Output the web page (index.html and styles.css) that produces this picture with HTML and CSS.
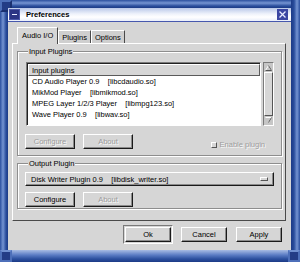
FILE: index.html
```html
<!DOCTYPE html>
<html>
<head>
<meta charset="utf-8">
<link rel="stylesheet" href="styles.css">
</head>
<body>
<div class="win">
  <div class="corner c-tl"></div>
  <div class="corner c-bl"></div>
  <div class="corner c-br"></div>
  <div class="titlebar">
    <span class="ticon"><span class="dash"></span></span>
    <span class="title">Preferences</span>
    <span class="close"><svg width="11" height="11" viewBox="0 0 11 11"><path d="M2.5 2.5 L8.5 8.5 M8.5 2.5 L2.5 8.5" stroke="#e8ecff" stroke-width="1.3" fill="none"/></svg></span>
  </div>
  <div class="client">
    <div class="notebook">
      <div class="tabs">
        <div class="tab active">Audio I/O</div>
        <div class="tab">Plugins</div>
        <div class="tab">Options</div>
      </div>
      <div class="page">
        <fieldset class="group g-input">
          <legend>Input Plugins</legend>
          <div class="listwrap">
            <div class="list">
              <div class="lhead">Input plugins</div>
              <div class="row">CD Audio Player 0.9&nbsp;&nbsp;&nbsp;&nbsp;[libcdaudio.so]</div>
              <div class="row">MikMod Player&nbsp;&nbsp;&nbsp;&nbsp;[libmikmod.so]</div>
              <div class="row">MPEG Layer 1/2/3 Player&nbsp;&nbsp;&nbsp;&nbsp;[libmpg123.so]</div>
              <div class="row">Wave Player 0.9&nbsp;&nbsp;&nbsp;&nbsp;[libwav.so]</div>
            </div>
            <div class="scroll">
              <svg class="arr" width="7" height="6" viewBox="0 0 7 6"><path d="M0.5 5.5 L3.5 0.5 L6.5 5.5" stroke="#fff" fill="none"/><path d="M3.5 0.5 L6.5 5.5 L0.5 5.5" stroke="#555" fill="none"/></svg>
              <div class="slider"></div>
              <svg class="arr" width="7" height="6" viewBox="0 0 7 6"><path d="M0.5 0.5 L6.5 0.5 L3.5 5.5" stroke="#fff" fill="none"/><path d="M6.5 0.5 L3.5 5.5" stroke="#555" fill="none"/></svg>
            </div>
          </div>
          <div class="btnrow">
            <button class="btn w50" disabled>Configure</button>
            <button class="btn w50" disabled>About</button>
            <span class="check"><span class="box"></span>Enable plugin</span>
          </div>
        </fieldset>
        <fieldset class="group g-output">
          <legend>Output Plugin</legend>
          <div class="optmenu"><span>Disk Writer Plugin 0.9&nbsp;&nbsp;&nbsp;&nbsp;[libdisk_writer.so]</span><span class="ind"></span></div>
          <div class="btnrow">
            <button class="btn w50">Configure</button>
            <button class="btn w50" disabled>About</button>
          </div>
        </fieldset>
      </div>
    </div>
    <div class="actions">
      <span class="defring"><button class="btn w46">Ok</button></span>
      <button class="btn w46">Cancel</button>
      <button class="btn w46">Apply</button>
    </div>
  </div>
</div>
</body>
</html>
```

FILE: styles.css
```css
* { box-sizing: border-box; }
html, body { margin: 0; padding: 0; }
body {
  font-family: "Liberation Sans", Arial, sans-serif;
  font-size: 7.5px;
  color: #000;
  background: #2a4f9f;
}
.win {
  position: relative;
  width: 300px;
  height: 262px;
  padding: 8px 9px 12px 8px;
  display: flex;
  flex-direction: column;
  background:
    linear-gradient(to right, #2b4f9e 0, #7594d2 3px, #2a4d9c 6px, #1c3a86 8px) left top / 8px 100% no-repeat,
    linear-gradient(to left, #2b4f9e 0, #7594d2 3px, #2a4d9c 6px, #1c3a86 9px) right top / 9px 100% no-repeat,
    linear-gradient(to bottom, #2b4f9e 0, #7594d2 3px, #2a4d9c 6px, #1c3a86 8px) left top / 100% 8px no-repeat,
    linear-gradient(to top, #1c3a86 0, #2b4f9e 3px, #5b7cc4 7px, #a8bce4 12px) left bottom / 100% 12px no-repeat,
    #2a4f9f;
}
.corner { position: absolute; width: 12px; height: 12px; background: #233c86; border: 2px solid #4d6fb9; }
.c-tl { left: 0; top: 0; border-right-color: #1a3070; border-bottom-color: #1a3070; }
.c-bl { left: 0; bottom: 0; border-top-color: #6f8fd0; }
.c-br { right: 0; bottom: 0; border-top-color: #6f8fd0; }

.titlebar {
  position: relative;
  z-index: 1;
  height: 14px;
  display: flex;
  align-items: center;
  background: linear-gradient(to bottom, #b9c7e8 0, #eef2fb 45%, #ffffff 70%, #e9eefa 100%);
  border-bottom: 1px solid #4758ad;
}
.ticon {
  width: 11px; height: 11px;
  margin-left: 1px;
  background: #2c3585;
  border: 1px solid #4a56a8;
  display: flex; align-items: center;
}
.ticon .dash { display: block; width: 5px; height: 1px; background: #e8ecff; margin-left: 2px; }
.title { font-weight: bold; margin-left: 6px; flex: 1; font-size: 7.6px; }
.close {
  width: 11px; height: 11px;
  margin-right: 3px;
  background: #3b46a2;
  display: flex;
}

.client {
  flex: 1;
  background: #d6d6d6;
  display: flex;
  flex-direction: column;
}
.notebook { margin: 5px 5px 0 4px; display: flex; flex-direction: column; }
.tabs { display: flex; padding-left: 5px; height: 16px; align-items: flex-end; position: relative; z-index: 1; }
.tab {
  height: 13px;
  padding: 0 3px;
  display: flex; align-items: center;
  border-left: 1px solid #fff;
  border-top: 1px solid #fff;
  border-right: 1px solid #4a4a4a;
  background: #cfcfcf;
}
.tab.active { height: 17px; margin-bottom: -1px; background: #d6d6d6; padding: 0 4px 1px; }
.page {
  height: 178px;
  border: 1px solid;
  border-color: #fff #4a4a4a #4a4a4a #fff;
  padding: 3px 3px 0 4px;
  display: flex; flex-direction: column; gap: 3px;
}
.group {
  margin: 0;
  padding: 0 7px 0 8px;
  border: 1px solid #8e8e8e;
  box-shadow: inset 1px 1px #fff, 1px 1px #fff;
}
.group legend { padding: 0 1px; margin-left: 2px; background: #d6d6d6; line-height: 9px; }
.g-input { height: 109px; padding-top: 6px; }
.g-output { height: 50px; padding-top: 3px; }

.listwrap { display: flex; gap: 2px; height: 64px; }
.list {
  flex: 1;
  background: #fff;
  border: 1px solid;
  border-color: #7a7a7a #fff #fff #7a7a7a;
  box-shadow: inset 1px 1px #222;
  padding: 1px 0 0 1px;
}
.lhead {
  height: 12px;
  background: #d6d6d6;
  border: 1px solid;
  border-color: #fff #5a5a5a #5a5a5a #fff;
  padding-left: 3px;
  display: flex; align-items: center;
}
.row { height: 11px; line-height: 11px; padding-left: 4px; white-space: pre; }
.scroll {
  width: 11px;
  background: #c6c6c6;
  border: 1px solid;
  border-color: #7a7a7a #fff #fff #7a7a7a;
  display: flex; flex-direction: column; align-items: center;
  padding: 1px 0;
}
.arr { display: block; margin: 1px 0; }
.slider { flex: 1; width: 9px; background: #d6d6d6; border: 1px solid; border-color: #fff #555 #555 #fff; }

.btnrow { display: flex; align-items: center; gap: 8px; margin-top: 8px; margin-left: -1px; }
.g-output .btnrow { margin-top: 6px; }
.btn {
  font: inherit;
  height: 15px;
  padding: 0;
  background: #d6d6d6;
  color: #000;
  border: 1px solid;
  border-color: #fff #1a1a1a #1a1a1a #fff;
  box-shadow: inset -1px -1px #8a8a8a;
}
.btn:disabled { color: #9c9c9c; text-shadow: 1px 1px #fafafa; }
.w50 { width: 50px; }
.w46 { width: 46px; }
.check { margin-left: auto; margin-right: 9px; display: flex; align-items: center; color: #9c9c9c; text-shadow: 1px 1px #fafafa; margin-top: 6px; }
.check .box { width: 6px; height: 6px; border: 1px solid; border-color: #fff #555 #555 #fff; margin-right: 3px; background: #d6d6d6; }

.optmenu {
  height: 14px;
  margin-left: -1px;
  margin-top: 1px;
  border: 1px solid;
  border-color: #fff #1a1a1a #1a1a1a #fff;
  box-shadow: inset -1px -1px #8a8a8a;
  display: flex; align-items: center;
  padding: 0 5px 0 5px;
  white-space: pre;
}
.optmenu span:first-child { flex: 1; }
.optmenu .ind { width: 8px; height: 4px; border: 1px solid; border-color: #fff #555 #555 #fff; }

.actions { display: flex; justify-content: flex-end; align-items: center; gap: 9px; padding: 4px 9px 0 0; }
.defring { display: flex; padding: 1px; border: 1px solid; border-color: #7a7a7a #fff #fff #7a7a7a; margin-right: -1px; }
```
